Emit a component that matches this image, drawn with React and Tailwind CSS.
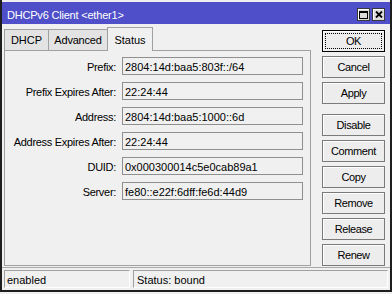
import React from 'react'

const rows = [
  ['Prefix:', '2804:14d:baa5:803f::/64'],
  ['Prefix Expires After:', '22:24:44'],
  ['Address:', '2804:14d:baa5:1000::6d'],
  ['Address Expires After:', '22:24:44'],
  ['DUID:', '0x000300014c5e0cab89a1'],
  ['Server:', 'fe80::e22f:6dff:fe6d:44d9'],
]

const actions = ['Disable', 'Comment', 'Copy', 'Remove', 'Release', 'Renew']

function TitleButton({ children }) {
  return (
    <div className="w-[13px] h-[13px] border border-[#3a3a3a] bg-[#dcdcdc] shadow-[inset_1px_1px_0_#ffffff] flex items-center justify-center">
      {children}
    </div>
  )
}

function Button({ label, focused }) {
  return (
    <button
      className={`relative h-[22px] w-full text-[11px] leading-none tracking-[-0.4px] text-black bg-[#ededed] shadow-[inset_1px_1px_0_#ffffff] border ${
        focused ? 'border-black' : 'border-[#7a7a7a]'
      }`}
    >
      {focused && (
        <span className="absolute inset-[2px] border border-dotted border-black" />
      )}
      {label}
    </button>
  )
}

export default function App() {
  return (
    <div
      className="w-[392px] h-[294px] bg-[#f0f0f0] text-black"
      style={{ fontFamily: '"Liberation Sans", Arial, sans-serif' }}
    >
      <div className="h-[292px] border-x-2 border-b-2 border-[#1e1e1e] pt-[2px] flex flex-col">
        {/* Title bar */}
        <div className="h-[22px] bg-[#4f50c9] flex items-start justify-between pl-[5px] pr-[5px]">
          <span className="mt-[8px] text-[11px] leading-[11px] tracking-[-0.2px] text-white">
            DHCPv6 Client &lt;ether1&gt;
          </span>
          <div className="flex gap-[2px] mt-[6px]">
            <TitleButton>
              <svg width="9" height="8" viewBox="0 0 9 8">
                <rect x="0.5" y="0.5" width="8" height="7" fill="none" stroke="#000" />
                <rect x="0" y="0" width="9" height="2" fill="#000" />
              </svg>
            </TitleButton>
            <TitleButton>
              <svg width="8" height="7" viewBox="0 0 8 7">
                <path d="M1 0.5 L7 6.5 M7 0.5 L1 6.5" stroke="#000" strokeWidth="1.8" />
              </svg>
            </TitleButton>
          </div>
        </div>

        {/* Main area */}
        <div className="h-[242px] flex">
          <div className="ml-[2px] w-[307px] flex flex-col">
            {/* Tabs */}
            <div className="h-[26px] flex items-end text-[11px]">
              <div className="w-[44px] h-[21px] border-l border-t border-[#a0a0a0] bg-[#e3e3e3] flex items-center justify-center">
                DHCP
              </div>
              <div className="w-[59px] h-[21px] border-l border-t border-[#a0a0a0] bg-[#e3e3e3] flex items-center justify-center tracking-[-0.2px]">
                Advanced
              </div>
              <div className="relative z-10 -mb-[1px] w-[46px] h-[24px] border-x border-t border-[#a0a0a0] bg-[#f0f0f0] flex items-start justify-center pt-[4px]">
                Status
              </div>
            </div>

            {/* Panel */}
            <div className="h-[216px] border border-[#a0a0a0] pt-[6px] flex flex-col gap-[7px]">
              {rows.map(([label, value]) => (
                <div key={label} className="flex h-[18px] text-[11px]">
                  <div className="w-[111px] text-right leading-[20px] tracking-[-0.3px] whitespace-nowrap">
                    {label}
                  </div>
                  <div className="ml-[6px] w-[181px] h-[18px] border border-[#8f8f8f] bg-[#f0f0f0] pl-[2px] leading-[18px] overflow-hidden whitespace-nowrap">
                    {value}
                  </div>
                </div>
              ))}
            </div>
          </div>

          {/* Buttons */}
          <div className="ml-[11px] w-[63px] mt-[6px] flex flex-col gap-[4px]">
            <Button label="OK" focused />
            <Button label="Cancel" />
            <Button label="Apply" />
            <div className="h-[6px] -my-[2px]" />
            {actions.map(a => (
              <Button key={a} label={a} />
            ))}
          </div>
        </div>

        {/* Status bar */}
        <div className="mt-[1px] border-t border-[#a8a8a8] pt-[2px] pb-[2px] px-[2px] flex gap-[3px] text-[11px]">
          <div className="w-[126px] h-[18px] border border-t-[#a0a0a0] border-l-[#a0a0a0] border-b-white border-r-white pl-[2px] leading-[18px]">
            enabled
          </div>
          <div className="flex-1 h-[18px] border border-t-[#a0a0a0] border-l-[#a0a0a0] border-b-white border-r-white pl-[3px] leading-[18px]">
            Status: bound
          </div>
        </div>
      </div>
    </div>
  )
}
